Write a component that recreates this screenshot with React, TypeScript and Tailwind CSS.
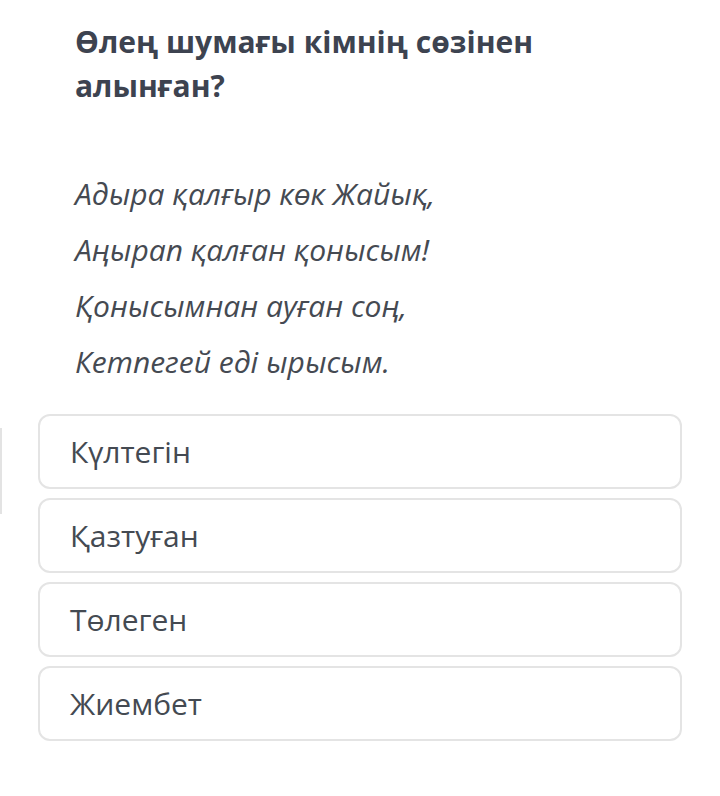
import React from 'react';

const lines = [
  'Адыра қалғыр көк Жайық,',
  'Аңырап қалған қонысым!',
  'Қонысымнан ауған соң,',
  'Кетпегей еді ырысым.',
];

const options = ['Күлтегін', 'Қазтуған', 'Төлеген', 'Жиембет'];

export default function App() {
  return (
    <div className="relative min-h-[796px] w-[720px] bg-white font-['Open_Sans',sans-serif] text-[#3f4550]">
      <div className="absolute left-0 top-[428px] h-[86px] w-[2px] bg-[#e3e3e3]" />
      <div className="px-[75px] pt-[20px]">
        <h1 className="text-[30px] font-bold leading-[44px] text-[#3d4350]">
          Өлең шумағы кімнің сөзінен
          <br />
          алынған?
        </h1>
        <div className="mt-[66px] flex flex-col gap-[16px]">
          {lines.map((l) => (
            <p key={l} className="text-[30px] italic leading-[40px] text-[#454a52]">
              {l}
            </p>
          ))}
        </div>
      </div>
      <div className="mt-[32px] flex flex-col gap-[9px] px-[38px]">
        {options.map((o) => (
          <div
            key={o}
            className="flex h-[75px] items-center rounded-[12px] border-2 border-[#e4e4e4] px-[30px] text-[30px] text-[#444a52]"
          >
            {o}
          </div>
        ))}
      </div>
    </div>
  );
}
